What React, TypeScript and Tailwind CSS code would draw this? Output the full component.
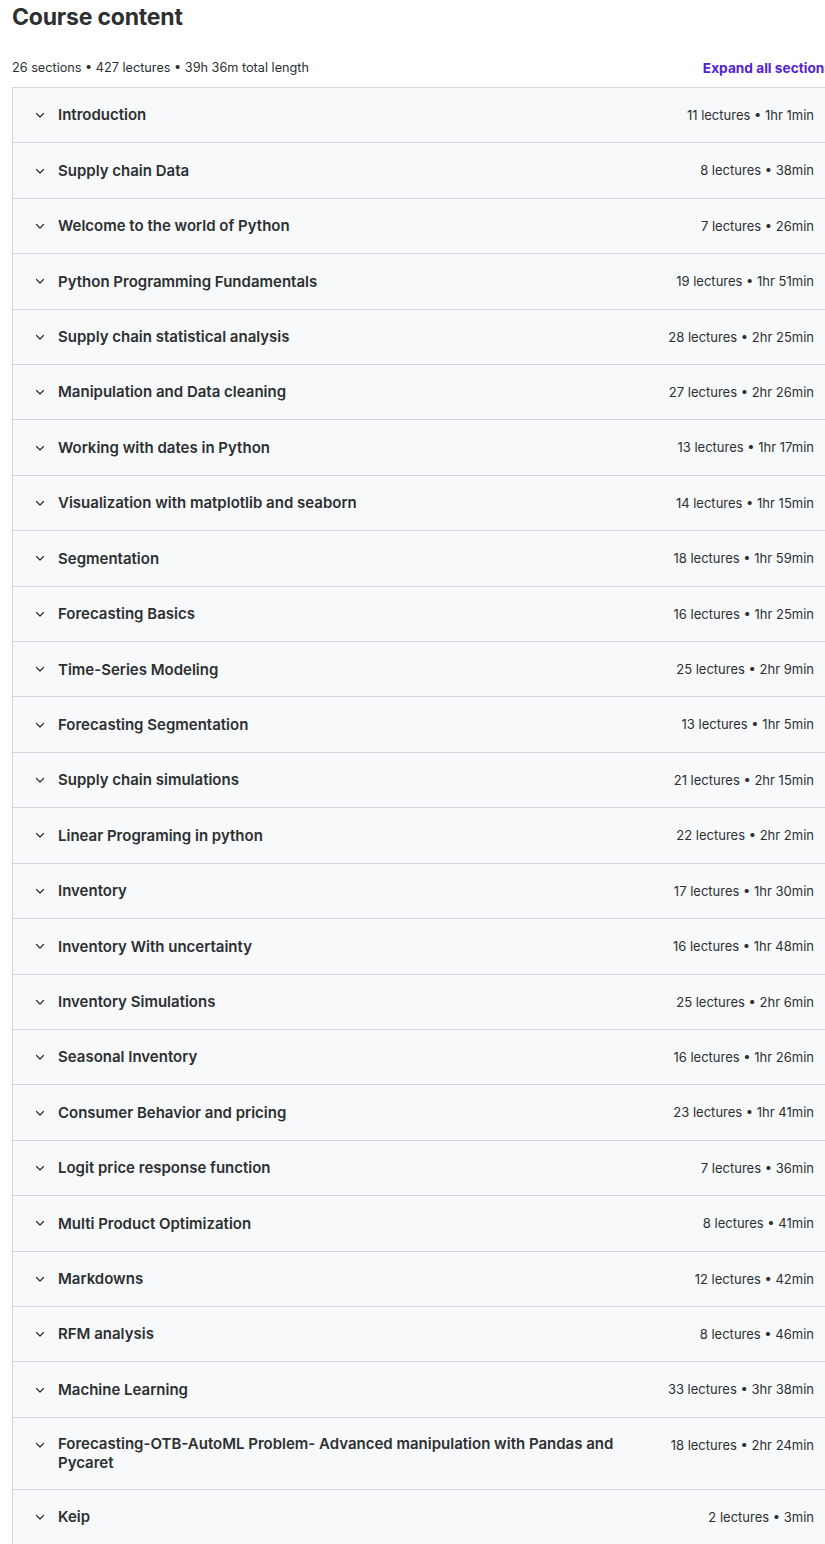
import React from "react";

type Section = { title: string; lectures: number; length: string };

const sections: Section[] = [
  { title: "Introduction", lectures: 11, length: "1hr 1min" },
  { title: "Supply chain Data", lectures: 8, length: "38min" },
  { title: "Welcome to the world of Python", lectures: 7, length: "26min" },
  { title: "Python Programming Fundamentals", lectures: 19, length: "1hr 51min" },
  { title: "Supply chain statistical analysis", lectures: 28, length: "2hr 25min" },
  { title: "Manipulation and Data cleaning", lectures: 27, length: "2hr 26min" },
  { title: "Working with dates in Python", lectures: 13, length: "1hr 17min" },
  { title: "Visualization with matplotlib and seaborn", lectures: 14, length: "1hr 15min" },
  { title: "Segmentation", lectures: 18, length: "1hr 59min" },
  { title: "Forecasting Basics", lectures: 16, length: "1hr 25min" },
  { title: "Time-Series Modeling", lectures: 25, length: "2hr 9min" },
  { title: "Forecasting Segmentation", lectures: 13, length: "1hr 5min" },
  { title: "Supply chain simulations", lectures: 21, length: "2hr 15min" },
  { title: "Linear Programing in python", lectures: 22, length: "2hr 2min" },
  { title: "Inventory", lectures: 17, length: "1hr 30min" },
  { title: "Inventory With uncertainty", lectures: 16, length: "1hr 48min" },
  { title: "Inventory Simulations", lectures: 25, length: "2hr 6min" },
  { title: "Seasonal Inventory", lectures: 16, length: "1hr 26min" },
  { title: "Consumer Behavior and pricing", lectures: 23, length: "1hr 41min" },
  { title: "Logit price response function", lectures: 7, length: "36min" },
  { title: "Multi Product Optimization", lectures: 8, length: "41min" },
  { title: "Markdowns", lectures: 12, length: "42min" },
  { title: "RFM analysis", lectures: 8, length: "46min" },
  { title: "Machine Learning", lectures: 33, length: "3hr 38min" },
  {
    title: "Forecasting-OTB-AutoML Problem- Advanced manipulation with Pandas and Pycaret",
    lectures: 18,
    length: "2hr 24min",
  },
  { title: "Keip", lectures: 2, length: "3min" },
];

function Chevron() {
  return (
    <svg width="12" height="12" viewBox="0 0 12 12" fill="none" className="shrink-0">
      <path d="M2.5 4.5 6 8l3.5-3.5" stroke="#2d2f31" strokeWidth="1.2" strokeLinecap="round" strokeLinejoin="round" />
    </svg>
  );
}

export default function App() {
  return (
    <div className="w-[825px] overflow-hidden bg-white text-[#2d2f31] font-['Inter','Noto_Sans',sans-serif]">
      <div className="ml-[12px] w-[824px]">
        <h2 className="text-[23px] leading-[36px] font-bold tracking-[-0.2px] -mt-[1px]">Course content</h2>
        <div className="flex items-end justify-between mt-[24px] mb-[10px]">
          <span className="text-[12.7px] leading-[18px] text-[#2d2f31]">
            26 sections • 427 lectures • 39h 36m total length
          </span>
          <span className="text-[13.7px] leading-[18px] font-bold text-[#5624d0] mr-[4px]">Expand all sections</span>
        </div>
        <div className="border border-[#d1d7dc] border-b-0">
          {sections.map((s) => (
            <div
              key={s.title}
              className="flex items-start justify-between gap-6 bg-[#f7f9fa] border-b border-[#d1d7dc] pl-[21px] pr-[21px] py-[16px]"
            >
              <div className="flex items-start gap-[12px] min-w-0">
                <span className="h-[22.4px] flex items-center">
                  <Chevron />
                </span>
                <span className="min-h-[22.4px] flex items-center">
                  <span className="text-[15px] font-semibold leading-[19.5px] max-w-[570px]">{s.title}</span>
                </span>
              </div>
              <span className="text-[13px] leading-[22.4px] whitespace-nowrap">
                {s.lectures} lectures • {s.length}
              </span>
            </div>
          ))}
        </div>
      </div>
    </div>
  );
}
